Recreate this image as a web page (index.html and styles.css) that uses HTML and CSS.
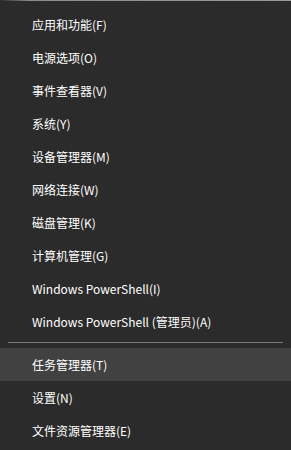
FILE: index.html
```html
<!DOCTYPE html>
<html lang="zh-CN">
<head>
  <meta charset="UTF-8">
  <title>Win+X</title>
  <link rel="stylesheet" href="styles.css">
</head>
<body>
  <div class="menu">
    <div class="menuItem">应用和功能(F)</div>
    <div class="menuItem">电源选项(O)</div>
    <div class="menuItem">事件查看器(V)</div>
    <div class="menuItem">系统(Y)</div>
    <div class="menuItem">设备管理器(M)</div>
    <div class="menuItem">网络连接(W)</div>
    <div class="menuItem">磁盘管理(K)</div>
    <div class="menuItem">计算机管理(G)</div>
    <div class="menuItem">Windows PowerShell(I)</div>
    <div class="menuItem">Windows PowerShell (管理员)(A)</div>
    <div class="separator"></div>
    <div class="menuItem active">任务管理器(T)</div>
    <div class="menuItem">设置(N)</div>
    <div class="menuItem">文件资源管理器(E)</div>
  </div>
</body>
</html>
```

FILE: styles.css
```css
html, body {
  margin: 0;
  height: 100%;
  overflow: hidden;
  background-color: #2b2b2b;
}

.menu {
  position: relative;
  height: 100%;
  padding-top: 8px;
  box-sizing: border-box;
  font-family: "Noto Sans CJK SC", "Liberation Sans", sans-serif;
  font-size: 12px;
  color: #ffffff;
}

.menu::before {
  content: "";
  position: absolute;
  top: 0;
  left: 0;
  right: 0;
  height: 1px;
  background: linear-gradient(to right, #2b2b2b 0px, #8c8c8c 30px, #9a9a9a 100%);
}

.menuItem {
  height: 33px;
  line-height: 33px;
  padding-left: 32px;
  white-space: nowrap;
}

.menuItem.active {
  background-color: #414141;
}

.separator {
  height: 1px;
  margin: 4px 8px 5px 8px;
  background-color: #7a7a7a;
}
```
